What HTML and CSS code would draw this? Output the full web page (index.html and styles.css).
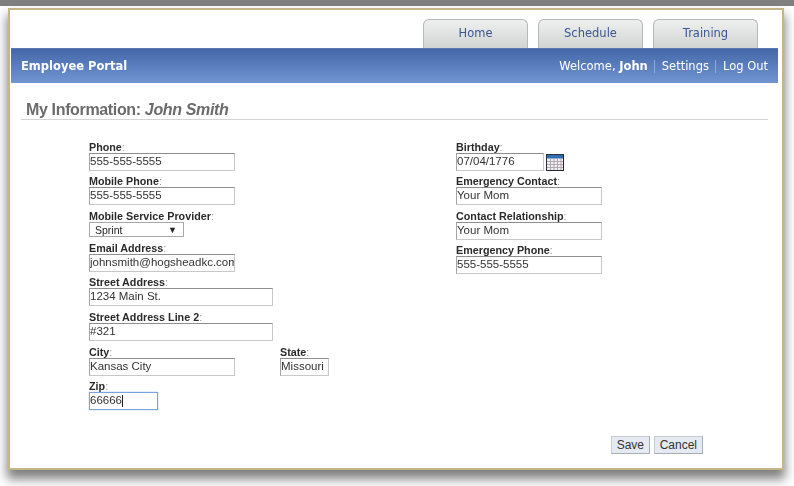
FILE: index.html
```html
<!DOCTYPE html>
<html lang="en">
  <head>
    <meta charset="UTF-8" />
    <title>Employee Portal</title>
    <link rel="stylesheet" href="styles.css">
  </head>
  <body>
    <div class="top-strip"></div>
    <div class="frame">
      <div class="tabs">
        <a class="tab">Home</a>
        <a class="tab">Schedule</a>
        <a class="tab">Training</a>
      </div>
      <div class="banner">
        <div class="brand">Employee Portal</div>
        <div class="user-nav">
          <span>Welcome, <strong>John</strong></span>
          <i class="sep"></i>
          <a>Settings</a>
          <i class="sep"></i>
          <a>Log Out</a>
        </div>
      </div>
      <h1 class="page-title">My Information: <em>John Smith</em></h1>
      <div class="form-cols">
        <div class="col-left">
          <div class="field">
            <label>Phone<span class="colon">:</span></label>
            <input type="text" class="w-med" value="555-555-5555" />
          </div>
          <div class="field gap-6">
            <label>Mobile Phone<span class="colon">:</span></label>
            <input type="text" class="w-med" value="555-555-5555" />
          </div>
          <div class="field gap-6">
            <label>Mobile Service Provider<span class="colon">:</span></label>
            <div class="fake-select"><span>Sprint</span><b>▼</b></div>
          </div>
          <div class="field">
            <label>Email Address<span class="colon">:</span></label>
            <input type="text" class="w-med" value="johnsmith@hogsheadkc.com" />
          </div>
          <div class="field gap-6">
            <label>Street Address<span class="colon">:</span></label>
            <input type="text" class="w-long" value="1234 Main St." />
          </div>
          <div class="field gap-6">
            <label>Street Address Line 2<span class="colon">:</span></label>
            <input type="text" class="w-long" value="#321" />
          </div>
          <div class="field-row">
            <div class="field">
              <label>City<span class="colon">:</span></label>
              <input type="text" class="w-med" value="Kansas City" />
            </div>
            <div class="field">
              <label>State<span class="colon">:</span></label>
              <input type="text" class="w-state" value="Missouri" />
            </div>
          </div>
          <div class="field">
            <label>Zip<span class="colon">:</span></label>
            <div class="zip-wrap">
              <input type="text" class="w-zip" value="66666" />
              <i class="caret"></i>
            </div>
          </div>
        </div>
        <div class="col-right">
          <div class="field">
            <label>Birthday<span class="colon">:</span></label>
            <div class="date-row">
              <input type="text" class="w-date" value="07/04/1776" />
              <svg class="cal-icon" width="18" height="17" viewBox="0 0 18 17">
                <rect x="0.5" y="0.5" width="17" height="16" fill="#f1eef0" stroke="#2f333c" />
                <rect x="1" y="1" width="16" height="3.5" fill="#2f6db5" />
                <path d="M1 7.5h16M1 10.5h16M1 13.5h16M4.5 5v11M8 5v11M11.500 5v11M15 5v11" stroke="#b3a9b2" stroke-width="1" fill="none" />
                <path d="M17.500 1v16M1 16.500h16" stroke="#23262d" stroke-width="1" fill="none" />
              </svg>
            </div>
          </div>
          <div class="field gap-6">
            <label>Emergency Contact<span class="colon">:</span></label>
            <input type="text" class="w-med" value="Your Mom" />
          </div>
          <div class="field">
            <label>Contact Relationship<span class="colon">:</span></label>
            <input type="text" class="w-med" value="Your Mom" />
          </div>
          <div class="field">
            <label>Emergency Phone<span class="colon">:</span></label>
            <input type="text" class="w-med" value="555-555-5555" />
          </div>
        </div>
      </div>
      <div class="actions">
        <button class="btn-save">Save</button>
        <button>Cancel</button>
      </div>
    </div>
  </body>
</html>
```

FILE: styles.css
```css
html,
body {
  height: 100%;
}

body {
  margin: 0;
  overflow: hidden;
  background-color: #ffffff;
  font-family: 'Liberation Sans', Arial, sans-serif;
  color: #222;
}

.top-strip {
  height: 6px;
  background-color: #808080;
}

.frame {
  box-sizing: border-box;
  width: 776px;
  height: 462px;
  margin: 2px 0 0 8px;
  padding: 9px 4px 0 1px;
  background-color: #ffffff;
  border: 2px solid #c4b687;
  box-shadow: 0 8px 10px 1px rgba(0, 0, 0, 0.5);
  filter: blur(0.4px);
}

.tabs {
  display: flex;
  gap: 10px;
  height: 29px;
  padding-left: 412px;
}

.tab {
  box-sizing: border-box;
  width: 105px;
  padding-top: 6px;
  text-align: center;
  font-family: 'DejaVu Sans', Verdana, sans-serif;
  font-size: 11.5px;
  color: #3a5590;
  background: linear-gradient(#eef0f0, #d2d4d4);
  border: 1px solid #b4b8ba;
  border-bottom: none;
  border-radius: 6px 6px 0 0;
}

.banner {
  box-sizing: border-box;
  display: flex;
  justify-content: space-between;
  align-items: center;
  height: 35px;
  padding: 0 10px;
  font-family: 'DejaVu Sans', Verdana, sans-serif;
  font-size: 11.5px;
  color: #ffffff;
  background: linear-gradient(#4467a8, #7195d2);
  border-top: 1px solid #5a79b0;
}

.brand {
  font-weight: bold;
}

.user-nav {
  display: flex;
  align-items: center;
  gap: 6.5px;
}

.sep {
  width: 1px;
  height: 13px;
  background-color: #8fa9d6;
}

.page-title {
  margin: 19px 0 0 10px;
  padding: 0 0 0 5px;
  height: 17px;
  width: 742px;
  font-size: 16px;
  letter-spacing: -0.35px;
  line-height: 15px;
  font-weight: bold;
  color: #6b6b6b;
  border-bottom: 1px solid #d4d4d4;
}

.form-cols {
  display: flex;
  margin-top: 22px;
  padding-left: 78px;
}

.col-left {
  width: 367px;
}

.field {
  display: flex;
  flex-direction: column;
  align-items: flex-start;
  margin-bottom: 5px;
}

.gap-6 {
  margin-bottom: 6px;
}

.field label {
  height: 11px;
  font-size: 10.75px;
  line-height: 11px;
  font-weight: bold;
  color: #2a2a2a;
}

.colon {
  font-weight: normal;
  color: #999;
}

.field input {
  box-sizing: border-box;
  height: 18px;
  margin: 0;
  padding: 0 0 2px;
  font-family: 'Liberation Sans', Arial, sans-serif;
  font-size: 11.5px;
  color: #333;
  background-color: #ffffff;
  border: 1px solid #c8c8c8;
  border-top-color: #8e8e8e;
  border-left-color: #a4a4a4;
  outline: none;
}

.w-med {
  width: 146px;
}

.w-long {
  width: 184px;
}

.w-state {
  width: 49px;
}

.w-zip {
  width: 69px;
}

.w-date {
  width: 88px;
}

.fake-select {
  box-sizing: border-box;
  display: flex;
  justify-content: space-between;
  align-items: center;
  width: 95px;
  height: 15px;
  padding: 0 6px 0 5px;
  font-size: 10.5px;
  border: 1px solid #a8a8a8;
}

.fake-select b {
  font-size: 9px;
  font-weight: normal;
}

.field-row {
  display: flex;
  gap: 45px;
}

.zip-wrap {
  position: relative;
  display: flex;
}

.zip-wrap input {
  border: 1px solid #7aa3e0;
  box-shadow: 0 0 1px #7aa3e0;
}

.caret {
  position: absolute;
  top: 3px;
  left: 33px;
  width: 1px;
  height: 12px;
  background-color: #222;
}

.date-row {
  display: flex;
  align-items: center;
  gap: 2px;
}

.actions {
  display: flex;
  justify-content: flex-end;
  gap: 4px;
  margin-top: 21px;
  padding-right: 75px;
}

.actions button {
  box-sizing: border-box;
  height: 18px;
  padding: 0 5px;
  font-family: 'Liberation Sans', Arial, sans-serif;
  font-size: 12px;
  color: #333;
  background-color: #e4e9f2;
  border: 1px solid #c6cbd4;
  border-right-color: #a8adb6;
  border-bottom-color: #a8adb6;
}

.actions .btn-save {
  width: 39px;
}
```
